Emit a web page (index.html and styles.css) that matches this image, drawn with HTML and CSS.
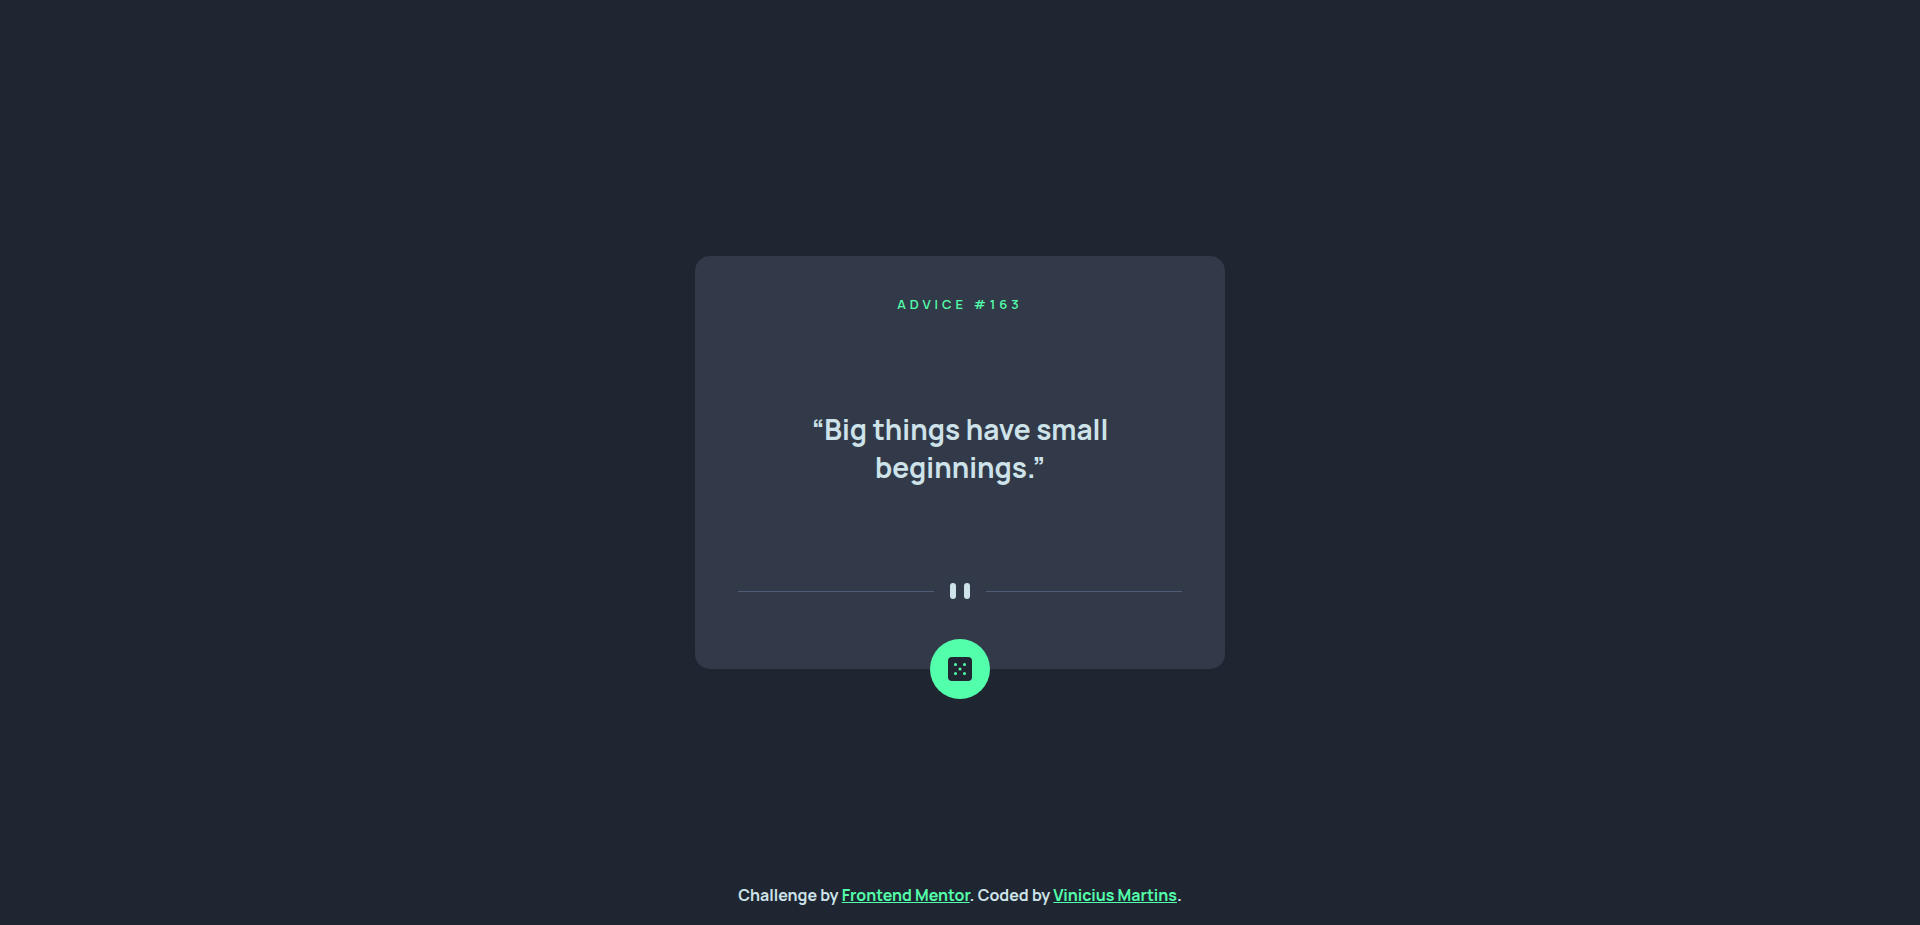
FILE: index.html
```html
<!DOCTYPE html>
<html lang="en">
<head>
<meta charset="utf-8">
<meta name="viewport" content="width=device-width, initial-scale=1">
<title>Advice generator</title>
<link rel="stylesheet" href="styles.css">
</head>
<body class="page">
<main class="card">
  <h1 class="card-title">Advice #163</h1>
  <p class="quote">“Big things have small beginnings.”</p>
  <svg class="divider" viewBox="0 0 444 16" aria-hidden="true">
    <path fill="#4F5D74" d="M0 8h196v1H0zM248 8h196v1H248z"/>
    <g fill="#CEE3E9"><rect x="212" width="6" height="16" rx="3"/><rect x="226" width="6" height="16" rx="3"/></g>
  </svg>
  <button class="dice" type="button" aria-label="New advice">
    <svg class="dice-icon" viewBox="0 0 24 24" aria-hidden="true">
      <rect width="24" height="24" rx="4" fill="#202733"/>
      <g fill="#53FFAA"><circle cx="7.5" cy="7.5" r="1.5"/><circle cx="16.5" cy="7.5" r="1.5"/><circle cx="12" cy="12" r="1.5"/><circle cx="7.5" cy="16.5" r="1.5"/><circle cx="16.5" cy="16.5" r="1.5"/></g>
    </svg>
  </button>
</main>
<footer class="credits">Challenge by <a class="link" href="https://www.frontendmentor.io">Frontend Mentor</a>. Coded by <a class="link" href="#">Vinicius Martins</a>.</footer>
</body>
</html>
```
FILE: styles.css
```css
* { box-sizing: border-box; }

.page {
  margin: 0;
  min-height: 100vh;
  display: grid;
  grid-template-rows: 1fr auto 1fr;
  justify-items: center;
  background: #1f2632;
  color: #cee3e9;
  font-family: Manrope, Inter, "Open Sans", sans-serif;
}

.card {
  grid-row: 2;
  position: relative;
  width: 100%;
  max-width: 530px;
  min-height: 413px;
  padding: 39px 43px 70px;
  display: flex;
  flex-direction: column;
  justify-content: space-between;
  align-items: center;
  border-radius: 15px;
  background: #323a49;
  text-align: center;
}

.card-title {
  margin: 0;
  color: #53ffaa;
  font-size: 13px;
  font-weight: 600;
  line-height: 18px;
  letter-spacing: 4px;
  text-transform: uppercase;
}

.quote {
  margin: 0;
  max-width: 400px;
  font-size: 28px;
  font-weight: 700;
  line-height: 38px;
}

.divider {
  display: block;
  width: 100%;
}

.dice {
  position: absolute;
  bottom: -30px;
  left: calc(50% - 30px);
  width: 60px;
  height: 60px;
  padding: 0;
  display: grid;
  place-items: center;
  border: 0;
  border-radius: 50%;
  background: #53ffaa;
  cursor: pointer;
}

.dice-icon {
  width: 24px;
  height: 24px;
}

.credits {
  grid-row: 3;
  align-self: end;
  padding: 0 16px 19px;
  font-size: 16px;
  font-weight: 700;
  line-height: 22px;
  text-align: center;
}

.link { color: #53ffaa; }
```
